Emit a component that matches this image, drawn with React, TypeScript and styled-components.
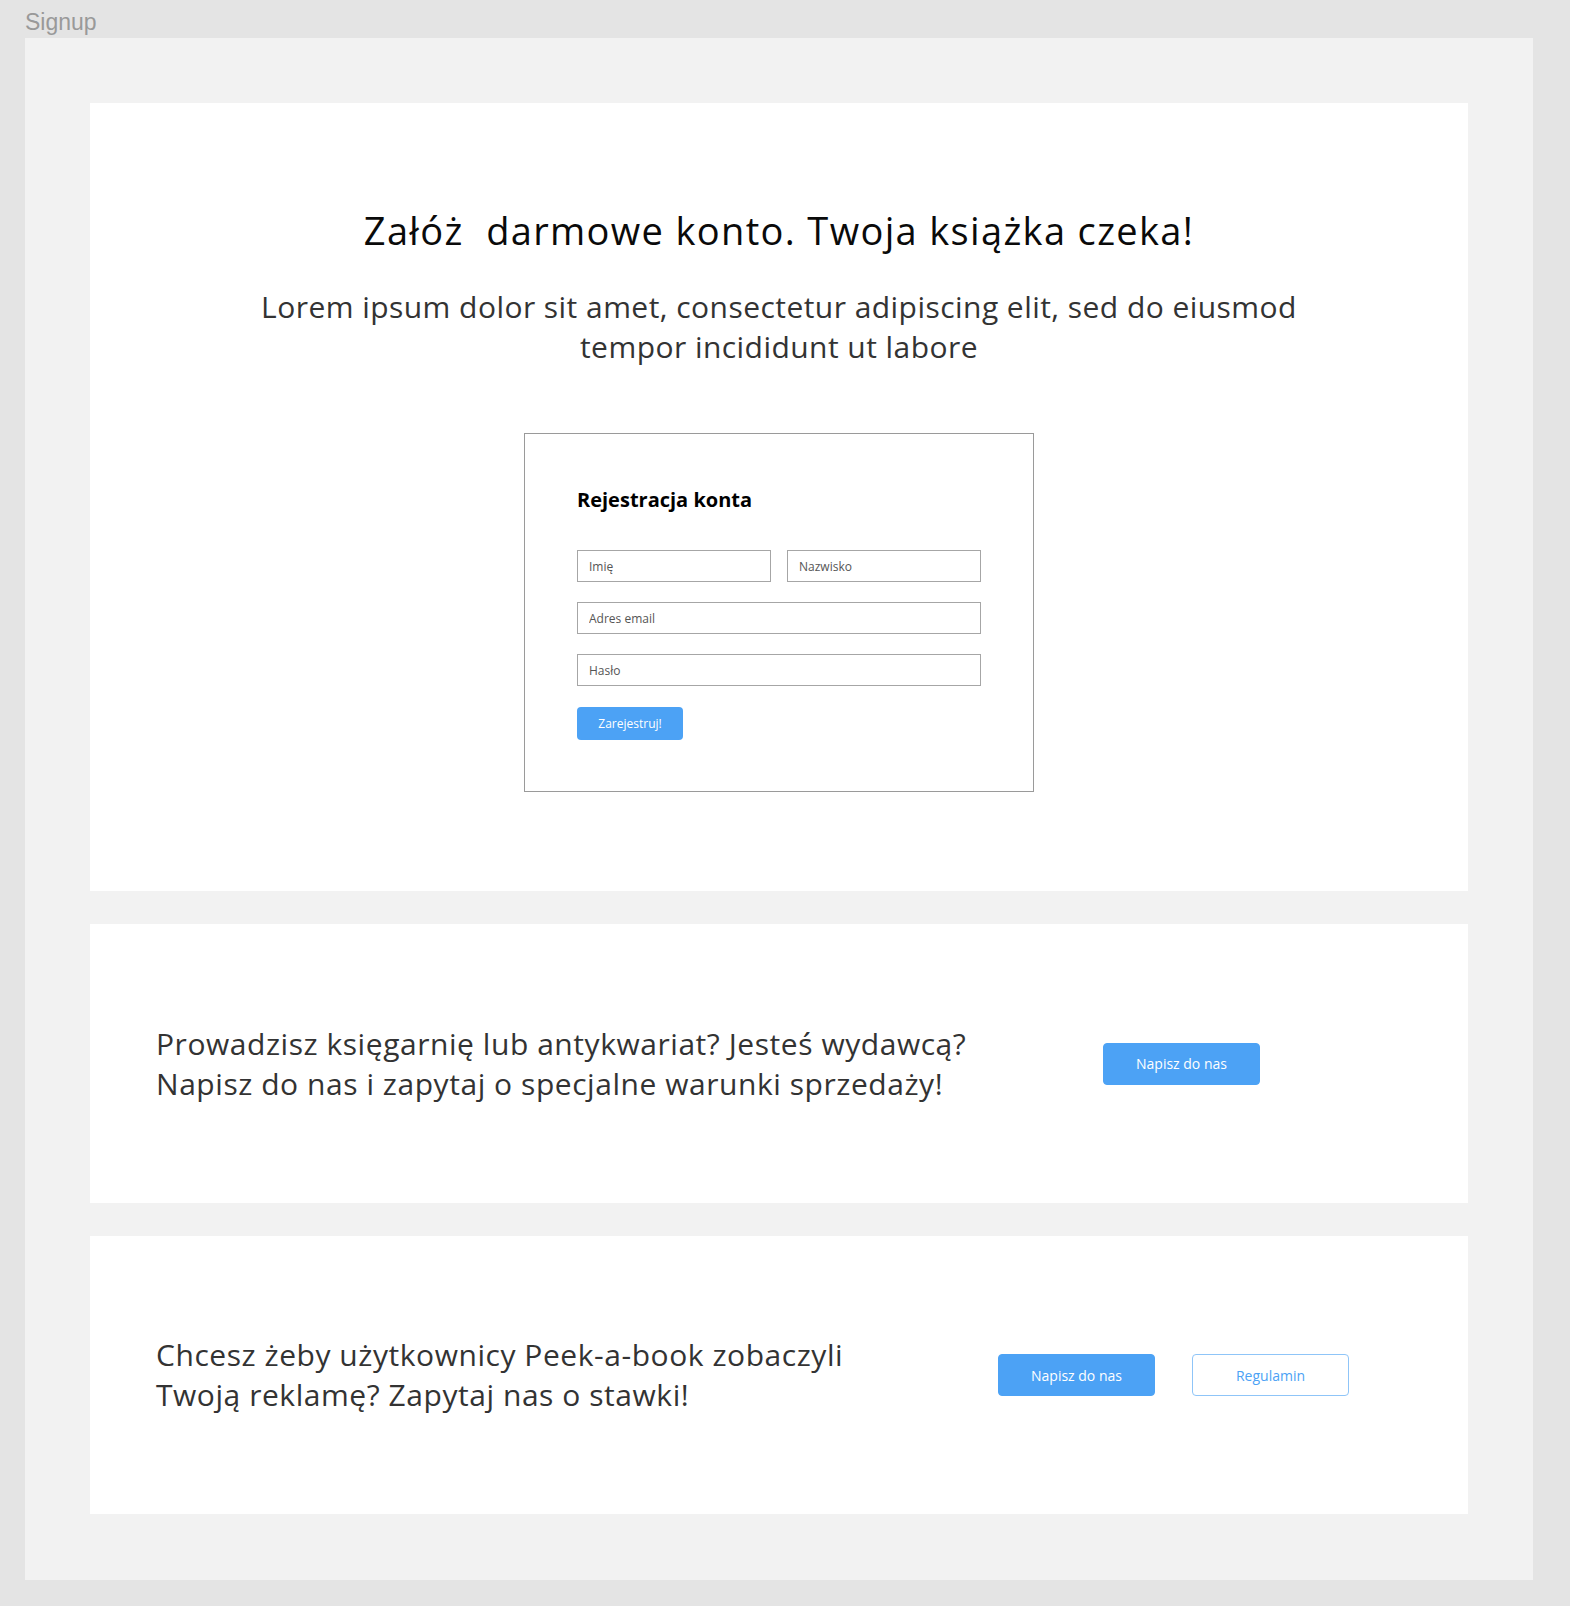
import React from "react";
import styled, { createGlobalStyle } from "styled-components";

const GlobalStyle = createGlobalStyle`
  *, *::before, *::after { box-sizing: border-box; }
  html, body { margin: 0; padding: 0; }
  body {
    background: #e4e4e4;
    font-family: "Open Sans", "Noto Sans", sans-serif;
    -webkit-font-smoothing: antialiased;
  }
`;

const Page = styled.div`
  width: 1570px;
  padding: 0 37px 26px 25px;
`;

const FrameLabel = styled.div`
  height: 38px;
  padding-top: 10px;
  font-family: "Liberation Sans", Arial, sans-serif;
  font-size: 23px;
  line-height: 24px;
  color: #999999;
`;

const Frame = styled.div`
  background: #f2f2f2;
  padding: 65px 65px 66px;
  display: flex;
  flex-direction: column;
  gap: 33px;
`;

const Card = styled.section<{ $height: number }>`
  background: #ffffff;
  height: ${(p) => p.$height}px;
`;

const Hero = styled(Card)`
  display: flex;
  flex-direction: column;
  align-items: center;
  padding-top: 103px;
`;

const Headline = styled.h1`
  margin: 0;
  font-size: 38px;
  line-height: 48px;
  font-weight: 400;
  letter-spacing: 1.35px;
  color: #0a0a0a;
  white-space: pre;
  text-align: center;
`;

const Lead = styled.p`
  margin: 33px 0 0;
  font-size: 30px;
  line-height: 40px;
  font-weight: 400;
  letter-spacing: 0.45px;
  color: #333333;
  text-align: center;
`;

const FormBox = styled.form`
  margin-top: 66px;
  width: 510px;
  border: 1px solid #9a9a9a;
  padding: 54px 52px 51px;
  display: flex;
  flex-direction: column;
`;

const FormTitle = styled.h2`
  margin: 0 0 38px;
  font-size: 20px;
  line-height: 24px;
  font-weight: 700;
  color: #000000;
`;

const Fields = styled.div`
  display: grid;
  grid-template-columns: 1fr 1fr;
  column-gap: 16px;
  row-gap: 20px;
`;

const Field = styled.input<{ $wide?: boolean }>`
  grid-column: ${(p) => (p.$wide ? "1 / -1" : "auto")};
  height: 32px;
  border: 1px solid #a6a6a6;
  border-radius: 0;
  padding: 0 11px;
  font-family: "Open Sans", sans-serif;
  font-size: 12px;
  color: #333333;
  background: #ffffff;
  outline: none;
  &::placeholder {
    color: #555555;
  }
`;

const SubmitButton = styled.button`
  margin-top: 21px;
  align-self: flex-start;
  width: 106px;
  height: 33px;
  border: none;
  border-radius: 4px;
  background: #4ca2f5;
  color: #ffffff;
  font-family: "Open Sans", sans-serif;
  font-size: 12px;
  cursor: pointer;
`;

const Banner = styled(Card)<{ $padRight: number }>`
  display: flex;
  align-items: center;
  padding: 0 ${(p) => p.$padRight}px 0 66px;
`;

const BannerText = styled.p`
  margin: 0;
  font-size: 30px;
  line-height: 40px;
  font-weight: 400;
  letter-spacing: 0.55px;
  color: #333333;
  white-space: nowrap;
`;

const Actions = styled.div`
  margin-left: auto;
  display: flex;
  gap: 37px;
`;

const ActionButton = styled.button<{ $outline?: boolean }>`
  width: 157px;
  height: 42px;
  border-radius: 4px;
  border: 1px solid ${(p) => (p.$outline ? "#8fc5f8" : "#4ca2f5")};
  background: ${(p) => (p.$outline ? "#ffffff" : "#4ca2f5")};
  color: ${(p) => (p.$outline ? "#4ca2f5" : "#ffffff")};
  font-family: "Open Sans", sans-serif;
  font-size: 14px;
  cursor: pointer;
`;

export default function App() {
  return (
    <>
      <GlobalStyle />
      <Page>
        <FrameLabel>Signup</FrameLabel>
        <Frame>
          <Hero $height={788}>
            <Headline>{"Załóż  darmowe konto. Twoja książka czeka!"}</Headline>
            <Lead>
              Lorem ipsum dolor sit amet, consectetur adipiscing elit, sed do eiusmod
              <br />
              tempor incididunt ut labore
            </Lead>
            <FormBox onSubmit={(e) => e.preventDefault()}>
              <FormTitle>Rejestracja konta</FormTitle>
              <Fields>
                <Field placeholder="Imię" />
                <Field placeholder="Nazwisko" />
                <Field $wide placeholder="Adres email" />
                <Field $wide type="password" placeholder="Hasło" />
              </Fields>
              <SubmitButton type="submit">Zarejestruj!</SubmitButton>
            </FormBox>
          </Hero>
          <Banner $height={279} $padRight={208}>
            <BannerText>
              Prowadzisz księgarnię lub antykwariat? Jesteś wydawcą?
              <br />
              Napisz do nas i zapytaj o specjalne warunki sprzedaży!
            </BannerText>
            <Actions>
              <ActionButton type="button">Napisz do nas</ActionButton>
            </Actions>
          </Banner>
          <Banner $height={278} $padRight={119}>
            <BannerText>
              Chcesz żeby użytkownicy Peek-a-book zobaczyli
              <br />
              Twoją reklamę? Zapytaj nas o stawki!
            </BannerText>
            <Actions>
              <ActionButton type="button">Napisz do nas</ActionButton>
              <ActionButton type="button" $outline>
                Regulamin
              </ActionButton>
            </Actions>
          </Banner>
        </Frame>
      </Page>
    </>
  );
}
